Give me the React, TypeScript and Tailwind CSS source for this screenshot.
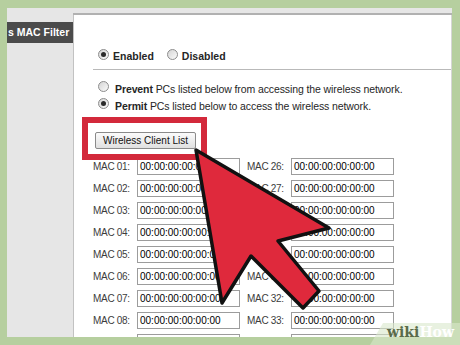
const leftMacs = ["01", "02", "03", "04", "05", "06", "07", "08"];
const rightMacs = ["26", "27", "28", "29", "30", "31", "32", "33"];

function Radio({ checked }: { checked?: boolean }) {
  return (
    <span className="flex h-[11px] w-[11px] shrink-0 items-center justify-center rounded-full border border-[#8c8c8c] bg-linear-to-br from-[#d4d4d4] to-[#fbfbfb]">
      {checked && <span className="h-[5px] w-[5px] rounded-full bg-[#2b2b2b]" />}
    </span>
  );
}

function MacField({ num }: { num?: string }) {
  return (
    <div className="flex items-center">
      <span className="w-[44px] text-[10px] tracking-[-0.3px] text-[#3c3c3c]">{num ? `MAC ${num}:` : ""}</span>
      <div className="h-[17px] w-[103px] border border-[#9c9c9c] bg-white pl-[2px] text-[10px] leading-[15px] text-black">
        {num ? "00:00:00:00:00:00" : ""}
      </div>
    </div>
  );
}

export default function App() {
  return (
    <div className="relative h-[345px] w-[460px] overflow-hidden bg-[#b6cf9f] pl-[7px] pt-[8px] font-['Liberation_Sans',Arial,sans-serif]">
      <div className="flex h-[329px] w-[445px] bg-[#e6e6e6]">
        {/* side menu */}
        <div className="w-[66px] shrink-0">
          <div className="mt-[14px] h-[21px] overflow-hidden whitespace-nowrap bg-[#4b4b4b] pl-[1px] text-[10.5px] font-bold leading-[21px] text-white">
            s MAC Filter
          </div>
        </div>

        {/* main panel */}
        <div className="flex flex-1 flex-col pt-[5px]">
          <div className="h-[2px] bg-[#b1b1b1]" />
          <div className="flex-1 overflow-hidden border-l border-r border-l-[#c2c2c2] border-r-[#d6d6d6] bg-white pl-[19px] pt-[34px] text-[#262626]">
            <div className="flex h-[12px] items-start pl-[5px] text-[10.5px] font-bold leading-[12px]">
              <Radio checked />
              <span className="ml-[4px] mt-[1px]">Enabled</span>
              <span className="ml-[13px]">
                <Radio />
              </span>
              <span className="ml-[4px] mt-[1px]">Disabled</span>
            </div>

            <div className="mt-[8px] h-px bg-[#b9b9b9]" />

            <div className="mt-[11px] flex h-[12px] items-start pl-[5px] text-[10.5px] leading-[12px] tracking-[-0.1px]">
              <Radio />
              <span className="ml-[6px] mt-[2px] whitespace-nowrap">
                <b>Prevent</b> PCs listed below from accessing the wireless network.
              </span>
            </div>
            <div className="mt-[5px] flex h-[12px] items-start pl-[5px] text-[10.5px] leading-[12px] tracking-[-0.1px]">
              <Radio checked />
              <span className="ml-[6px] mt-[2px] whitespace-nowrap">
                <b>Permit</b> PCs listed below to access the wireless network.
              </span>
            </div>

            <button className="ml-[2px] mt-[22px] h-[17px] w-[101px] rounded-[2px] border border-[#8a8a8a] bg-linear-to-b from-[#fbfbfb] to-[#e0e0e0] text-[10px] leading-[15px] text-[#111]">
              Wireless Client List
            </button>

            <div className="mt-[7px] flex gap-[7px]">
              <div className="flex flex-col gap-[5px]">
                {leftMacs.map((n) => (
                  <MacField key={n} num={n} />
                ))}
                <MacField />
              </div>
              <div className="flex flex-col gap-[5px]">
                {rightMacs.map((n) => (
                  <MacField key={n} num={n} />
                ))}
                <MacField />
              </div>
            </div>
          </div>
        </div>
      </div>

      {/* red highlight box */}
      <div className="absolute left-[82px] top-[117px] h-[43px] w-[125px] border-[6px] border-[#d3293b]" />

      {/* arrow */}
      <svg className="pointer-events-none absolute inset-0" width="460" height="345" viewBox="0 0 460 345">
        <polygon
          points="196,150 329,228 278,241 319,291 303,308 251,256 222,303"
          fill="#df293c"
          stroke="#111"
          strokeWidth="3.5"
          strokeLinejoin="round"
        />
        <polygon points="370,345 383,323 460,323 460,345" fill="#d9e8cc" fillOpacity="0.6" />
      </svg>

      {/* watermark */}
      <div className="absolute left-[387px] top-[324px] font-['DejaVu_Serif',serif] text-[14px] font-bold leading-[16px]">
        <span className="text-[#5a6b4a]">wiki</span>
        <span className="text-white">How</span>
      </div>
    </div>
  );
}
